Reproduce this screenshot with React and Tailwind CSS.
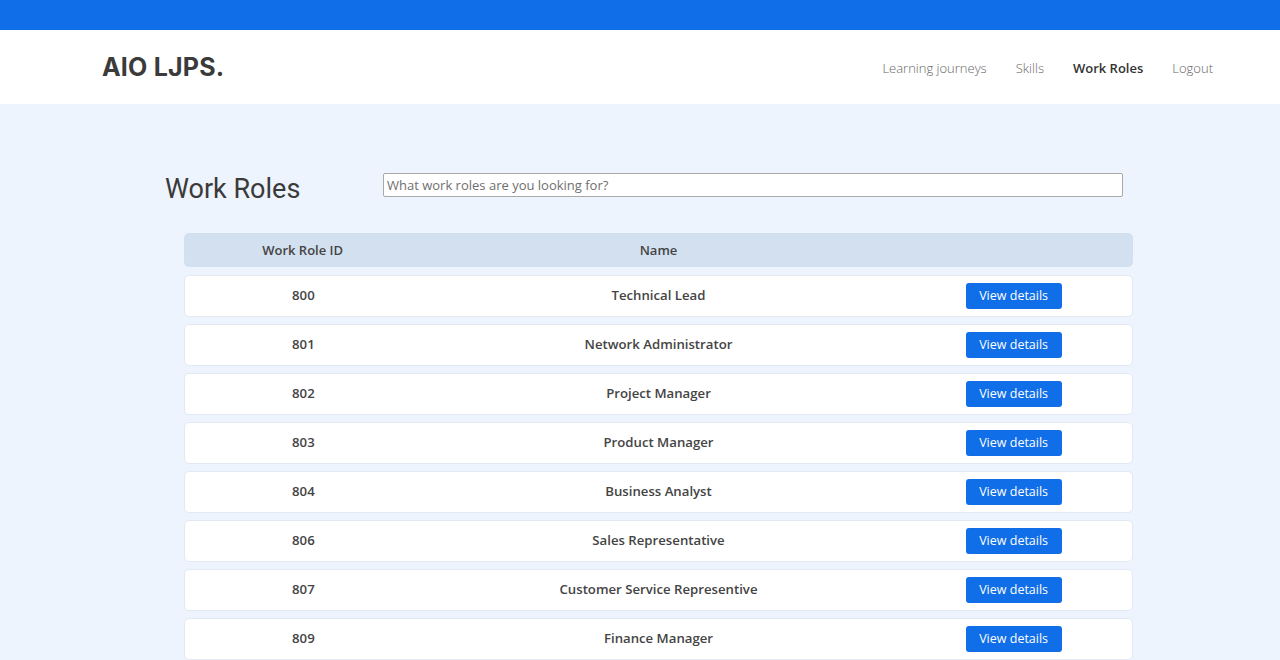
const roles = [
  { id: 800, name: 'Technical Lead' },
  { id: 801, name: 'Network Administrator' },
  { id: 802, name: 'Project Manager' },
  { id: 803, name: 'Product Manager' },
  { id: 804, name: 'Business Analyst' },
  { id: 806, name: 'Sales Representative' },
  { id: 807, name: 'Customer Service Representive' },
  { id: 809, name: 'Finance Manager' },
];

function Navbar() {
  return (
    <div className="bg-white h-[74px] flex items-center justify-between pl-[102px] pr-[67px]">
      <div className="pt-[2px] text-[25px] font-bold tracking-[0.2px] text-[#3b3b3b] font-['Inter',sans-serif]">AIO LJPS.</div>
      <nav className="pt-[4px] flex items-center gap-[29px] text-[13px] font-['Open_Sans',sans-serif]">
        <span className="font-light text-[#666]">Learning journeys</span>
        <span className="font-light text-[#666]">Skills</span>
        <span className="font-semibold text-[#333]">Work Roles</span>
        <span className="font-light text-[#666]">Logout</span>
      </nav>
    </div>
  );
}

export default function App() {
  return (
    <div className="min-h-[660px] bg-[#eef4fd] font-['Open_Sans',sans-serif]">
      <div className="h-[30px] bg-[#106ee8]" />
      <Navbar />
      <main className="pt-[69px] pl-[165px] pr-[147px]">
        <div className="flex items-start h-[32px]">
          <h1 className="w-[218px] text-[27px] text-[#3a3a3a] font-['Roboto',sans-serif] leading-[32px]">Work Roles</h1>
          <input
            className="w-[740px] h-[24px] bg-white border border-[#a9a9a9] rounded-[2px] px-[3px] text-[13px] text-[#333] placeholder:text-[#6f6f6f] outline-none"
            placeholder="What work roles are you looking for?"
          />
        </div>
        <div className="mt-[28px] ml-[19px] w-[949px]">
          <div className="grid grid-cols-[1fr_2fr_1fr] items-center h-[34px] pt-[1px] bg-[#d3e0ef] rounded-[5px] text-[13px] font-semibold text-[#444]">
            <div className="text-center">Work Role ID</div>
            <div className="text-center">Name</div>
            <div />
          </div>
          <div className="mt-[8px] flex flex-col gap-[7px]">
            {roles.map((r) => (
              <div
                key={r.id}
                className="grid grid-cols-[1fr_2fr_1fr] items-center h-[42px] bg-white rounded-[5px] border border-[#e3e9f2] text-[13.2px] font-semibold text-[#444]"
              >
                <div className="text-center">{r.id}</div>
                <div className="text-center">{r.name}</div>
                <div className="flex justify-center">
                  <button className="w-[96px] h-[26px] bg-[#106ee8] text-white text-[12.5px] font-normal rounded-[3px]">
                    View details
                  </button>
                </div>
              </div>
            ))}
          </div>
        </div>
      </main>
    </div>
  );
}
